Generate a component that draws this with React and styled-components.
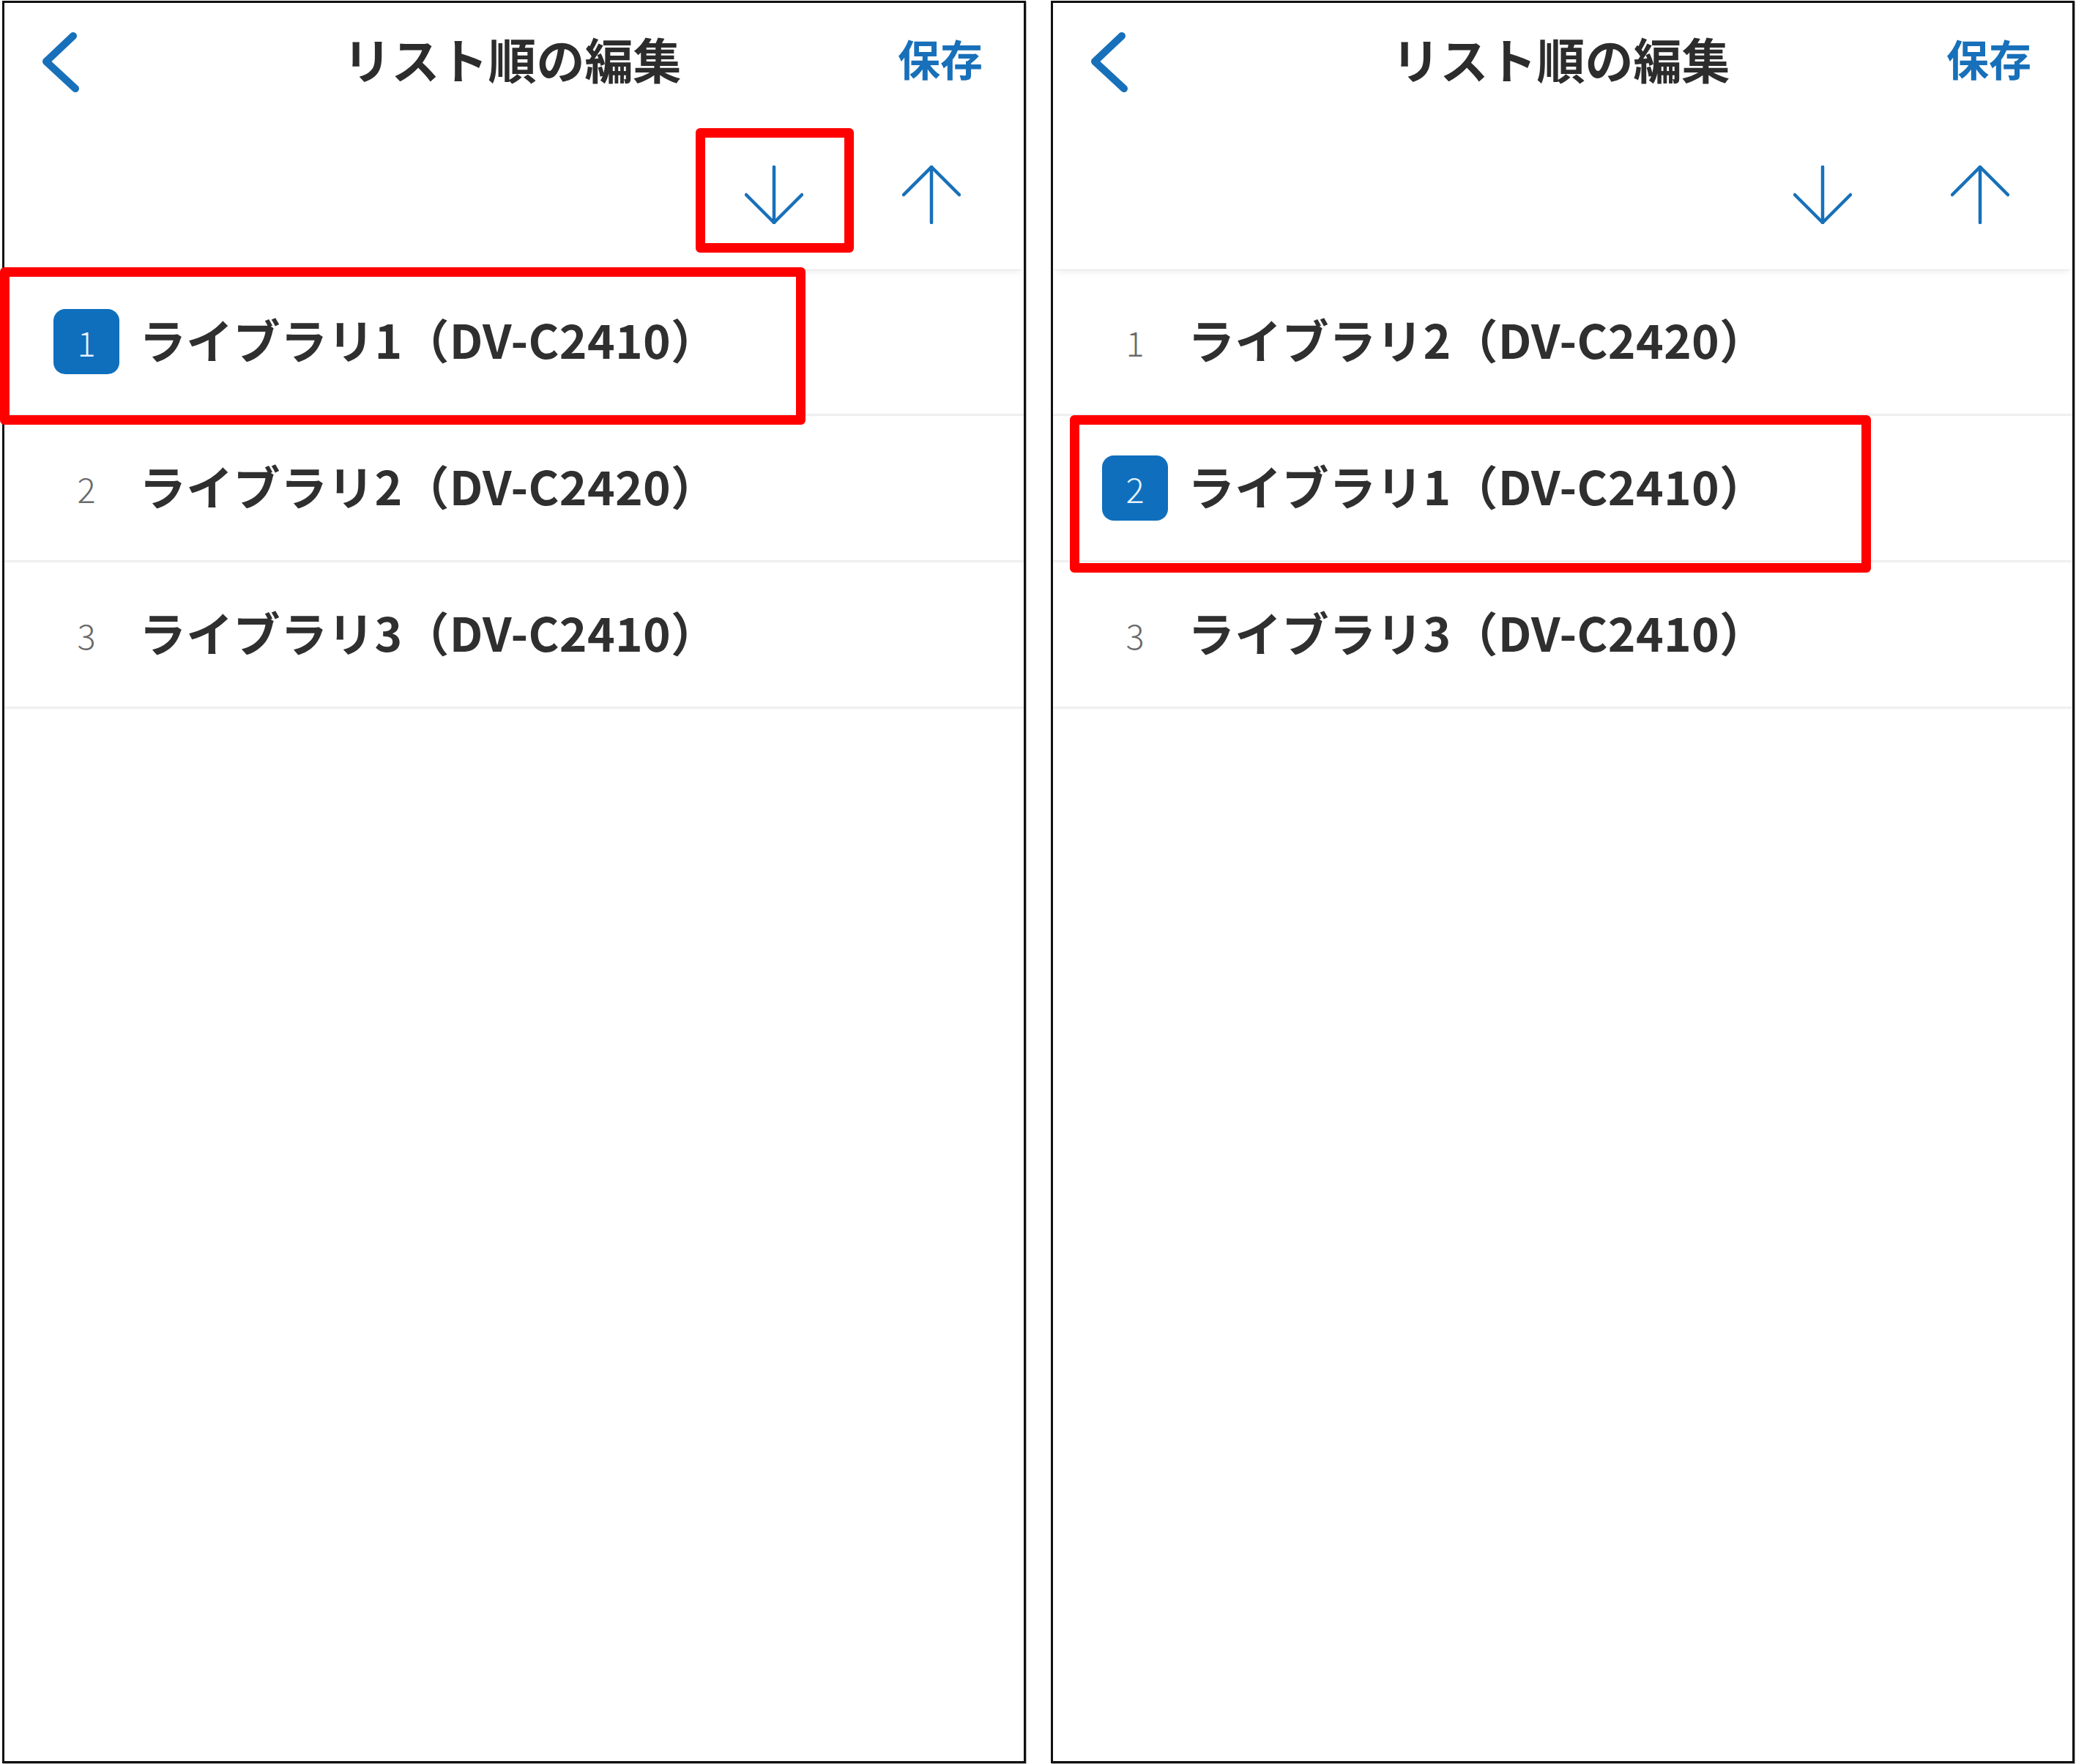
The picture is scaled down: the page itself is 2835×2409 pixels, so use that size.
import React from 'react';
import styled, { createGlobalStyle } from 'styled-components';

const GlobalStyle = createGlobalStyle`
  html, body { margin: 0; padding: 0; background: #ffffff; }
  body { font-family: "Noto Sans CJK JP", "Noto Sans", sans-serif; }
  * { box-sizing: border-box; }
`;

const BLUE = '#1770b9';

const Page = styled.div`
  display: flex;
  gap: 34px;
  padding: 1px 0 0 3px;
  width: 2835px;
  height: 2409px;
`;

const Panel = styled.section`
  position: relative;
  width: 1398px;
  height: 2407px;
  border: 3px solid #111;
  box-shadow: 1px 1px 0 #b5b5b5;
  background: #fff;
  display: flex;
  flex-direction: column;
`;

const Header = styled.header`
  height: 160px;
  display: grid;
  grid-template-columns: 1fr auto 1fr;
  align-items: center;
  padding: 0 56px 10px 51px;
`;

const BackButton = styled.div`
  display: flex;
  align-items: center;
  padding-top: 12px;
`;

const Title = styled.h1`
  margin: 0;
  font-size: 66px;
  font-weight: 700;
  color: #2c2c2c;
  letter-spacing: 0;
`;

const Save = styled.div`
  justify-self: end;
  font-size: 58px;
  font-weight: 700;
  color: ${BLUE};
`;

const Toolbar = styled.div`
  position: relative;
  z-index: 1;
  height: 204px;
  display: flex;
  justify-content: flex-end;
  align-items: center;
  gap: 135px;
  padding: 0 86px 0 0;
  background: #fff;
  box-shadow: 0 2px 0 -1px rgba(0, 0, 0, 0.05), 0 8px 8px -5px rgba(0, 0, 0, 0.08);
`;

const IconButton = styled.div`
  width: 80px;
  height: 80px;
  display: flex;
  align-items: center;
  justify-content: center;
`;

const List = styled.ul`
  list-style: none;
  margin: 0;
  padding: 0;
`;

const Row = styled.li`
  height: 200px;
  display: flex;
  align-items: center;
  gap: 27px;
  padding-left: 67px;
  border-bottom: 3px solid #efefef;
`;

const Index = styled.span`
  width: 90px;
  height: 89px;
  border-radius: 16px;
  display: flex;
  align-items: center;
  justify-content: center;
  font-size: 47px;
  font-weight: 300;
  background: ${(p) => (p.$selected ? '#0f6fbd' : 'transparent')};
  color: ${(p) => (p.$selected ? '#e6f2ff' : '#6a6a6a')};
`;

const Label = styled.span`
  margin-bottom: 10px;
  font-size: 64px;
  font-weight: 700;
  color: #2f2f2f;
  letter-spacing: 0.3px;
`;

const Mark = styled.div`
  position: absolute;
  left: ${(p) => p.$left}px;
  top: ${(p) => p.$top}px;
  width: ${(p) => p.$width}px;
  height: ${(p) => p.$height}px;
  border: 13px solid #ff0000;
  border-radius: 6px;
  pointer-events: none;
  z-index: 5;
`;

const Chevron = () => (
  <svg width="52" height="84" viewBox="0 0 52 84">
    <polyline
      points="43,6 6,41 46,78"
      fill="none"
      stroke={BLUE}
      strokeWidth="10"
      strokeLinecap="round"
      strokeLinejoin="round"
    />
  </svg>
);

const Arrow = ({ dir }) => (
  <svg width="80" height="80" viewBox="0 0 80 80">
    {dir === 'down' ? (
      <g fill="none" stroke={BLUE} strokeWidth="4.5" strokeLinecap="round" strokeLinejoin="round">
        <line x1="40" y1="2" x2="40" y2="78" />
        <polyline points="2,40 40,78 78,40" />
      </g>
    ) : (
      <g fill="none" stroke={BLUE} strokeWidth="4.5" strokeLinecap="round" strokeLinejoin="round">
        <line x1="40" y1="2" x2="40" y2="78" />
        <polyline points="2,40 40,2 78,40" />
      </g>
    )}
  </svg>
);

const panels = [
  {
    items: ['ライブラリ1（DV-C2410）', 'ライブラリ2（DV-C2420）', 'ライブラリ3（DV-C2410）'],
    selected: 0,
    marks: [
      { left: 944, top: 171, width: 216, height: 170 },
      { left: -6, top: 361, width: 1100, height: 215 },
    ],
  },
  {
    items: ['ライブラリ2（DV-C2420）', 'ライブラリ1（DV-C2410）', 'ライブラリ3（DV-C2410）'],
    selected: 1,
    marks: [{ left: 23, top: 563, width: 1094, height: 215 }],
  },
];

export default function App() {
  return (
    <>
      <GlobalStyle />
      <Page>
        {panels.map((panel, pi) => (
          <Panel key={pi}>
            <Header>
              <BackButton>
                <Chevron />
              </BackButton>
              <Title>リスト順の編集</Title>
              <Save>保存</Save>
            </Header>
            <Toolbar>
              <IconButton>
                <Arrow dir="down" />
              </IconButton>
              <IconButton>
                <Arrow dir="up" />
              </IconButton>
            </Toolbar>
            <List>
              {panel.items.map((item, i) => (
                <Row key={i}>
                  <Index $selected={i === panel.selected}>{i + 1}</Index>
                  <Label>{item}</Label>
                </Row>
              ))}
            </List>
            {panel.marks.map((m, mi) => (
              <Mark key={mi} $left={m.left} $top={m.top} $width={m.width} $height={m.height} />
            ))}
          </Panel>
        ))}
      </Page>
    </>
  );
}
